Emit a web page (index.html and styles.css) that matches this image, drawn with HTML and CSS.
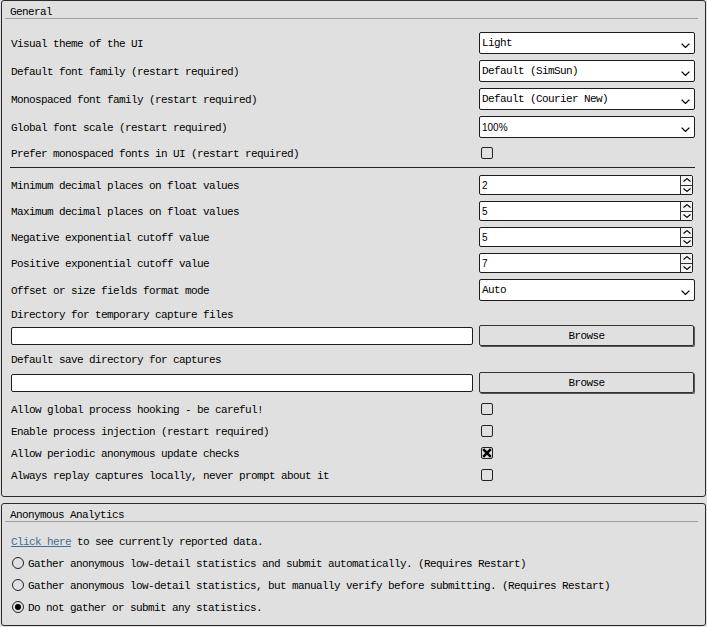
FILE: index.html
```html
<!DOCTYPE html>
<html>
<head>
<meta charset="utf-8">
<link rel="stylesheet" href="styles.css">
</head>
<body>
<div class="page">
  <section class="group general">
    <div class="group-title">General</div>
    <div class="rows">
      <div class="row h28"><span class="label">Visual theme of the UI</span>
        <div class="combo"><span>Light</span><svg class="chev" width="9" height="5" viewBox="0 0 9 5"><path d="M0.6 0.6 L4.5 4.4 L8.4 0.6" fill="none" stroke="#000" stroke-width="1.3"/></svg></div></div>
      <div class="row h28"><span class="label">Default font family (restart required)</span>
        <div class="combo"><span>Default (SimSun)</span><svg class="chev" width="9" height="5" viewBox="0 0 9 5"><path d="M0.6 0.6 L4.5 4.4 L8.4 0.6" fill="none" stroke="#000" stroke-width="1.3"/></svg></div></div>
      <div class="row h28"><span class="label">Monospaced font family (restart required)</span>
        <div class="combo"><span>Default (Courier New)</span><svg class="chev" width="9" height="5" viewBox="0 0 9 5"><path d="M0.6 0.6 L4.5 4.4 L8.4 0.6" fill="none" stroke="#000" stroke-width="1.3"/></svg></div></div>
      <div class="row h28"><span class="label">Global font scale (restart required)</span>
        <div class="combo"><span class="num">100%</span><svg class="chev" width="9" height="5" viewBox="0 0 9 5"><path d="M0.6 0.6 L4.5 4.4 L8.4 0.6" fill="none" stroke="#000" stroke-width="1.3"/></svg></div></div>
      <div class="row h24"><span class="label">Prefer monospaced fonts in UI (restart required)</span>
        <div class="ctl"><span class="check"></span></div></div>
      <div class="sep"></div>
      <div class="row h26"><span class="label">Minimum decimal places on float values</span>
        <div class="ctl"><div class="spin"><span class="spin-value">2</span><span class="spin-btns"><span><svg width="8" height="4" viewBox="0 0 8 4"><path d="M0.5 3.5 L4 0.6 L7.5 3.5" fill="none" stroke="#000" stroke-width="1.1"/></svg></span><span><svg width="8" height="4" viewBox="0 0 8 4"><path d="M0.5 0.5 L4 3.4 L7.5 0.5" fill="none" stroke="#000" stroke-width="1.1"/></svg></span></span></div></div></div>
      <div class="row h26"><span class="label">Maximum decimal places on float values</span>
        <div class="ctl"><div class="spin"><span class="spin-value">5</span><span class="spin-btns"><span><svg width="8" height="4" viewBox="0 0 8 4"><path d="M0.5 3.5 L4 0.6 L7.5 3.5" fill="none" stroke="#000" stroke-width="1.1"/></svg></span><span><svg width="8" height="4" viewBox="0 0 8 4"><path d="M0.5 0.5 L4 3.4 L7.5 0.5" fill="none" stroke="#000" stroke-width="1.1"/></svg></span></span></div></div></div>
      <div class="row h26"><span class="label">Negative exponential cutoff value</span>
        <div class="ctl"><div class="spin"><span class="spin-value">5</span><span class="spin-btns"><span><svg width="8" height="4" viewBox="0 0 8 4"><path d="M0.5 3.5 L4 0.6 L7.5 3.5" fill="none" stroke="#000" stroke-width="1.1"/></svg></span><span><svg width="8" height="4" viewBox="0 0 8 4"><path d="M0.5 0.5 L4 3.4 L7.5 0.5" fill="none" stroke="#000" stroke-width="1.1"/></svg></span></span></div></div></div>
      <div class="row h26"><span class="label">Positive exponential cutoff value</span>
        <div class="ctl"><div class="spin"><span class="spin-value">7</span><span class="spin-btns"><span><svg width="8" height="4" viewBox="0 0 8 4"><path d="M0.5 3.5 L4 0.6 L7.5 3.5" fill="none" stroke="#000" stroke-width="1.1"/></svg></span><span><svg width="8" height="4" viewBox="0 0 8 4"><path d="M0.5 0.5 L4 3.4 L7.5 0.5" fill="none" stroke="#000" stroke-width="1.1"/></svg></span></span></div></div></div>
      <div class="row h28"><span class="label">Offset or size fields format mode</span>
        <div class="combo"><span>Auto</span><svg class="chev" width="9" height="5" viewBox="0 0 9 5"><path d="M0.6 0.6 L4.5 4.4 L8.4 0.6" fill="none" stroke="#000" stroke-width="1.3"/></svg></div></div>
      <div class="row h20"><span class="label">Directory for temporary capture files</span></div>
      <div class="row h24"><div class="field"></div><div class="button">Browse</div></div>
      <div class="row h23"><span class="label">Default save directory for captures</span></div>
      <div class="row h24"><div class="field"></div><div class="button">Browse</div></div>
      <div class="row h22 mt3"><span class="label">Allow global process hooking - be careful!</span>
        <div class="ctl"><span class="check"></span></div></div>
      <div class="row h22"><span class="label">Enable process injection (restart required)</span>
        <div class="ctl"><span class="check"></span></div></div>
      <div class="row h22"><span class="label">Allow periodic anonymous update checks</span>
        <div class="ctl"><span class="check on"><svg width="10" height="10" viewBox="0 0 10 10"><path d="M1.2 1.2 L8.8 8.8 M8.8 1.2 L1.2 8.8" stroke="#000" stroke-width="2.6"/></svg></span></div></div>
      <div class="row h22"><span class="label">Always replay captures locally, never prompt about it</span>
        <div class="ctl"><span class="check"></span></div></div>
    </div>
  </section>
  <section class="group analytics">
    <div class="group-title">Anonymous Analytics</div>
    <div class="rows rows-a">
      <div class="row h22 start"><span class="label"><span class="link">Click here</span> to see currently reported data.</span></div>
      <div class="row h22 start"><span class="radio"></span><span class="label">Gather anonymous low-detail statistics and submit automatically. (Requires Restart)</span></div>
      <div class="row h22 start"><span class="radio"></span><span class="label">Gather anonymous low-detail statistics, but manually verify before submitting. (Requires Restart)</span></div>
      <div class="row h22 start"><span class="radio on"></span><span class="label">Do not gather or submit any statistics.</span></div>
    </div>
  </section>
</div>
</body>
</html>
```

FILE: styles.css
```css
* { box-sizing: border-box; }

body {
  margin: 0;
  background: #e0e0e0;
  color: #000;
  font-family: "Liberation Mono", "DejaVu Sans Mono", monospace;
  font-size: 11px;
  letter-spacing: -0.6px;
  line-height: 13px;
}

.page {
  width: 707px;
  padding-left: 1px;
}

.group {
  width: 705px;
  border: 1px solid #2a2a2a;
  border-radius: 3px;
}

.general {
  padding: 0 10px 10px 9px;
}

.analytics {
  margin-top: 6px;
  padding: 0 10px 7px 9px;
}

.group-title {
  height: 18px;
  margin: 0 -3px 0 -6px;
  padding: 5px 0 0 5px;
  border-bottom: 1px solid #a0a0a0;
  white-space: nowrap;
}

.rows {
  margin-top: 10px;
  display: flex;
  flex-direction: column;
}

.rows-a {
  margin-top: 8px;
}

.row {
  display: flex;
  align-items: center;
  justify-content: space-between;
}

.row.start {
  justify-content: flex-start;
}

.h20 { height: 20px; }
.h22 { height: 22px; }
.h23 { height: 23px; }
.h24 { height: 24px; }
.h26 { height: 26px; }
.h28 { height: 28px; }
.mt3 { margin-top: 3px; }

.label {
  white-space: nowrap;
  padding-top: 2px;
}

.ctl {
  width: 216px;
  display: flex;
  align-items: center;
}

.combo {
  width: 216px;
  height: 22px;
  background: #fff;
  border: 1px solid #1c1c1c;
  border-radius: 2px;
  padding: 1px 4px 0 2px;
  display: flex;
  align-items: center;
  justify-content: space-between;
  white-space: nowrap;
}

.chev {
  margin-top: 4px;
}

.num {
  font-family: "Liberation Sans", Arial, sans-serif;
  font-size: 10px;
  letter-spacing: 0;
}

.spin {
  width: 214px;
  height: 20px;
  background: #fff;
  border: 1px solid #1c1c1c;
  border-radius: 2px;
  display: flex;
}

.spin-value {
  flex: 1;
  padding: 1px 0 0 2px;
  display: flex;
  align-items: center;
  font-family: "Liberation Sans", Arial, sans-serif;
  font-size: 10px;
  letter-spacing: 0;
}

.spin-btns {
  width: 12px;
  border-left: 1px solid #333;
  display: flex;
  flex-direction: column;
  background: #f4f4f4;
}

.spin-btns > span {
  flex: 1;
  display: flex;
  align-items: center;
  justify-content: center;
}

.spin-btns > span + span {
  border-top: 1px solid #333;
}

.check {
  width: 12px;
  height: 12px;
  margin-left: 2px;
  border: 1px solid #222;
  border-radius: 2px;
  display: flex;
  align-items: center;
  justify-content: center;
}

.field {
  width: 462px;
  height: 18px;
  background: #fff;
  border: 1px solid #1c1c1c;
  border-radius: 2px;
}

.button {
  width: 215px;
  height: 21px;
  margin: 0 1px 1px 0;
  padding-top: 2px;
  border: 1px solid #333;
  border-radius: 2px;
  box-shadow: 1px 1px 0 #555;
  display: flex;
  align-items: center;
  justify-content: center;
}

.sep {
  margin: 2px 0 4px -1px;
  border-top: 1px solid #222;
}

.link {
  color: #4a6a94;
  text-decoration: underline;
}

.radio {
  width: 12px;
  height: 12px;
  margin: 0 4px 0 1px;
  border: 1px solid #222;
  border-radius: 50%;
  display: flex;
  align-items: center;
  justify-content: center;
  flex: none;
}

.radio.on::after {
  content: "";
  width: 6px;
  height: 6px;
  border-radius: 50%;
  background: #000;
}
```
